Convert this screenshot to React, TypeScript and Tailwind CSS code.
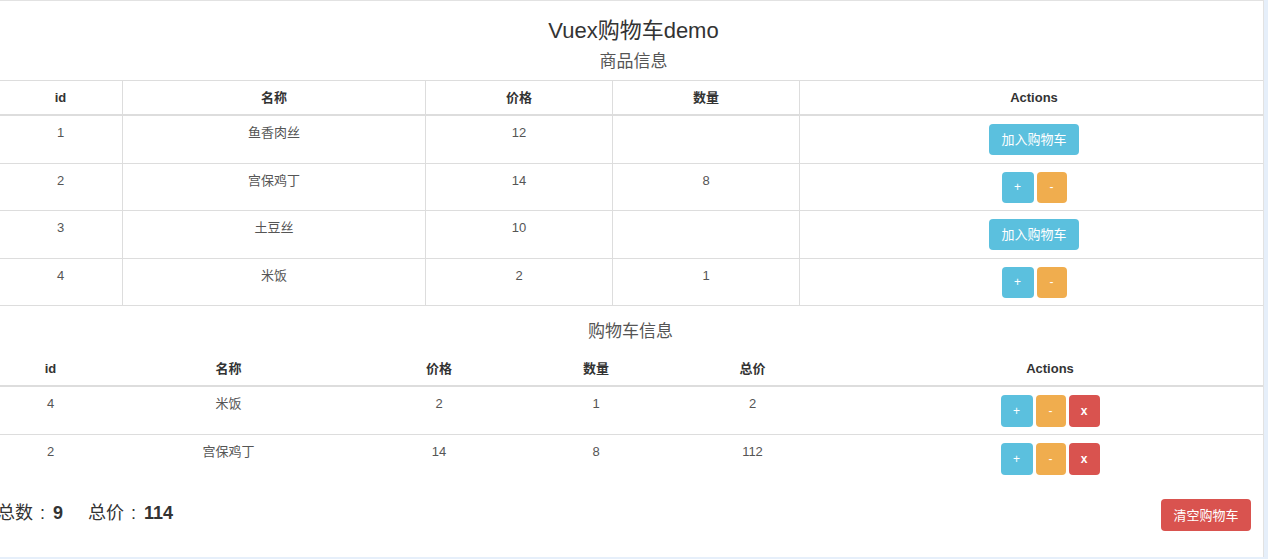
import React from "react";

type Good = { id: number; name: string; price: number; count?: number };

const goods: Good[] = [
  { id: 1, name: "鱼香肉丝", price: 12 },
  { id: 2, name: "宫保鸡丁", price: 14, count: 8 },
  { id: 3, name: "土豆丝", price: 10 },
  { id: 4, name: "米饭", price: 2, count: 1 },
];

const cart = [
  { id: 4, name: "米饭", price: 2, count: 1 },
  { id: 2, name: "宫保鸡丁", price: 14, count: 8 },
];

const font = "font-['Liberation_Sans','Noto_Sans_CJK_SC',sans-serif]";

function Btn({ kind, className, children }: { kind: "info" | "warning" | "danger"; className: string; children: React.ReactNode }) {
  const color =
    kind === "info" ? "bg-[#5bc0de]" : kind === "warning" ? "bg-[#f0ad4e]" : "bg-[#d9534f]";
  return (
    <button
      type="button"
      className={`${color} ${className} inline-flex items-center justify-center rounded-[4px] text-white leading-none`}
    >
      {children}
    </button>
  );
}

export default function App() {
  return (
    <div className={`${font} h-[559px] w-full overflow-hidden bg-[#e6effa] text-[#333]`}>
      <div className="h-[557px] w-[1264px] overflow-hidden border-t border-r border-[#e2e2e2] bg-white">
        <div className="-ml-[2px] w-[1271px]">
          {/* 标题 */}
          <div className="pt-[17px] text-center">
            <h1 className="text-[22px] leading-[26px] text-[#333]">Vuex购物车demo</h1>
            <h3 className="mt-[6px] text-[17px] leading-[24px] text-[#555]">商品信息</h3>
          </div>

          {/* 商品信息 */}
          <table className="mt-[6px] w-full table-fixed border-collapse border border-[#ddd] text-center text-[13px] text-[#555]">
            <colgroup>
              <col className="w-[124px]" />
              <col className="w-[303px]" />
              <col className="w-[187px]" />
              <col className="w-[187px]" />
              <col />
            </colgroup>
            <thead>
              <tr className="border-b-2 border-[#ddd]">
                {["id", "名称", "价格", "数量", "Actions"].map((h) => (
                  <th key={h} className="border-x border-[#ddd] py-[8px] font-bold leading-[17px] text-[#333]">
                    {h}
                  </th>
                ))}
              </tr>
            </thead>
            <tbody>
              {goods.map((g) => (
                <tr key={g.id} className="border-t border-[#ddd]">
                  <td className="border-x border-[#ddd] pt-[8px] pb-[7.5px] align-top leading-[18px]">{g.id}</td>
                  <td className="border-x border-[#ddd] pt-[8px] pb-[7.5px] align-top leading-[18px]">{g.name}</td>
                  <td className="border-x border-[#ddd] pt-[8px] pb-[7.5px] align-top leading-[18px]">{g.price}</td>
                  <td className="border-x border-[#ddd] pt-[8px] pb-[7.5px] align-top leading-[18px]">{g.count ?? ""}</td>
                  <td className="border-x border-[#ddd] pt-[8px] pb-[7.5px] align-top">
                    {g.count ? (
                      <div className="flex justify-center gap-[3px]">
                        <Btn kind="info" className="h-[31px] w-[32px] text-[12px]">+</Btn>
                        <Btn kind="warning" className="h-[31px] w-[30px] text-[12px]">-</Btn>
                      </div>
                    ) : (
                      <Btn kind="info" className="h-[31px] w-[90px] text-[13px]">加入购物车</Btn>
                    )}
                  </td>
                </tr>
              ))}
            </tbody>
          </table>

          {/* 购物车信息 */}
          <h3 className="mt-[14px] w-[1265px] text-center text-[17px] leading-[24px] text-[#555]">购物车信息</h3>
          <table className="mt-[8px] w-[1265px] table-fixed border-collapse text-center text-[13px] text-[#555]">
            <colgroup>
              <col className="w-[105px]" />
              <col className="w-[251px]" />
              <col className="w-[170px]" />
              <col className="w-[144px]" />
              <col className="w-[169px]" />
              <col />
            </colgroup>
            <thead>
              <tr className="border-b-2 border-[#ddd]">
                {["id", "名称", "价格", "数量", "总价", "Actions"].map((h) => (
                  <th key={h} className="py-[8px] font-bold leading-[17px] text-[#333]">
                    {h}
                  </th>
                ))}
              </tr>
            </thead>
            <tbody>
              {cart.map((c, i) => (
                <tr key={c.id} className={i > 0 ? "border-t border-[#ddd]" : ""}>
                  <td className="pt-[8px] pb-[7px] align-top leading-[18px]">{c.id}</td>
                  <td className="pt-[8px] pb-[7px] align-top leading-[18px]">{c.name}</td>
                  <td className="pt-[8px] pb-[7px] align-top leading-[18px]">{c.price}</td>
                  <td className="pt-[8px] pb-[7px] align-top leading-[18px]">{c.count}</td>
                  <td className="pt-[8px] pb-[7px] align-top leading-[18px]">{c.price * c.count}</td>
                  <td className="pt-[8px] pb-[7px] align-top">
                    <div className="flex justify-center gap-[3px]">
                      <Btn kind="info" className="h-[32px] w-[32px] text-[12px]">+</Btn>
                      <Btn kind="warning" className="h-[32px] w-[30px] text-[12px]">-</Btn>
                      <Btn kind="danger" className="h-[32px] w-[31px] text-[12px] font-bold">x</Btn>
                    </div>
                  </td>
                </tr>
              ))}
            </tbody>
          </table>

          {/* 合计 */}
          <div className="mt-[17px] flex w-[1265px] items-center justify-between pr-[12px]">
            <div className="-ml-[1px] -mt-[5px] text-[18px] leading-[24px] text-[#333]">
              <span>
                总数<span className="ml-[7px] mr-[8px]">:</span>
                <b>9</b>
              </span>
              <span className="ml-[25px]">
                总价<span className="ml-[7px] mr-[8px]">:</span>
                <b>114</b>
              </span>
            </div>
            <Btn kind="danger" className="h-[32px] w-[90px] text-[13px]">清空购物车</Btn>
          </div>
        </div>
      </div>
    </div>
  );
}
